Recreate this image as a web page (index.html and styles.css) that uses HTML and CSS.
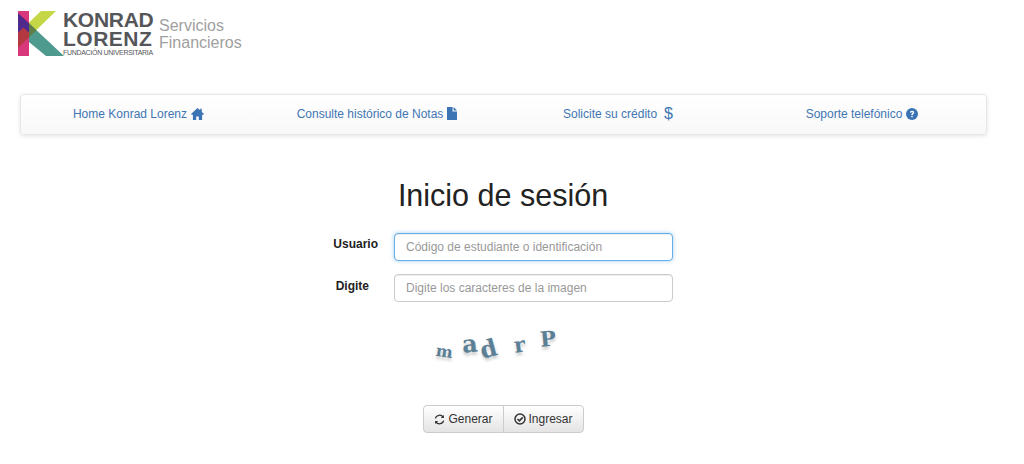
FILE: index.html
```html
<!DOCTYPE html>
<html lang="es">
<head>
  <meta charset="UTF-8">
  <meta name="viewport" content="width=device-width, initial-scale=1.0">
  <title>Inicio de sesión</title>
  <link rel="stylesheet" href="styles.css">
</head>

<body>
  <header class="brand">
    <svg class="brand-mark" width="46" height="45" viewBox="0 0 46 45">
      <rect width="11" height="45" fill="#d8377c"/>
      <polygon points="23,0 38,0 11,26.300 11,11.500" fill="#c5d646"/>
      <polygon points="11,12.300 46,45 28,45 11,31" fill="#4f9a8f"/>
      <polygon points="11,12.300 18.400,19.200 11,26.300" fill="#5f7d45"/>
      <polygon points="0,2 11,12.300 11,22 5.500,16.700 0,22" fill="#4f2a8c"/>
      <polygon points="0,22 5.500,16.700 11,22 11,26.300 0,37" fill="#b4383f"/>
    </svg>
    <div class="brand-name">
      <span class="brand-big konrad">KONRAD</span>
      <span class="brand-big lorenz">LORENZ</span>
      <span class="brand-small">FUNDACIÓN UNIVERSITARIA</span>
    </div>
    <div class="brand-sub">Servicios<br>Financieros</div>
  </header>

  <nav class="topnav">
    <a href="#">Home Konrad Lorenz
      <svg class="icon" width="13" height="12" viewBox="0 0 13 12"><path d="M6.500 0 0 6l.7.8h1.200V12h3.300V8.400h2.600V12h3.300V6.800h1.200l.7-.8-2.200-2V.8H9.200v1.500z" fill="#3b74b4"/></svg>
    </a>
    <a href="#">Consulte histórico de Notas
      <svg class="icon" width="10" height="13" viewBox="0 0 10 13"><path d="M0 0h5.600v4.400H10V13H0zM6.600 0 10 3.400H6.600z" fill="#3b74b4"/></svg>
    </a>
    <a href="#">Solicite su crédito <span class="dollar">$</span></a>
    <a href="#">Soporte telefónico
      <svg class="icon" width="12" height="12" viewBox="0 0 12 12"><circle cx="6" cy="6" r="6" fill="#3b74b4"/><path d="M3.900 4.600C4 3.400 4.900 2.700 6.100 2.700c1.200 0 2.100.8 2.100 1.800 0 1.500-1.500 1.400-1.500 2.500H5.300c0-1.700 1.400-1.700 1.400-2.500 0-.4-.3-.6-.7-.6-.4 0-.7.300-.8.800z M5.300 7.800h1.400v1.500H5.300z" fill="#fff"/></svg>
    </a>
  </nav>

  <main class="login">
    <h1>Inicio de sesión</h1>

    <div class="field">
      <label for="usuario">Usuario</label>
      <input class="focused" type="text" id="usuario" placeholder="Código de estudiante o identificación">
    </div>
    <div class="field">
      <label class="label-digite" for="digite">Digite</label>
      <input type="text" id="digite" placeholder="Digite los caracteres de la imagen">
    </div>

    <div class="captcha">
      <span class="c1">m</span><span class="c2">a</span><span class="c3">d</span><span class="c4">r</span><span class="c5">P</span>
    </div>

    <div class="btn-group">
      <button type="button">
        <svg width="11" height="11" viewBox="0 0 12 12" fill="none" stroke="#333" stroke-width="1.400"><path d="M1.500 4.800A4.700 4.700 0 0 1 10 3.500"/><path d="M10.500 7.200A4.700 4.700 0 0 1 2 8.500"/><path d="M10.800 1v3.400H7.400z M1.200 11V7.600h3.400z" fill="#333" stroke="none"/></svg>
        Generar
      </button>
      <button type="button">
        <svg width="12" height="12" viewBox="0 0 12 12" fill="none" stroke="#333"><circle cx="6" cy="6" r="5" stroke-width="1.500"/><path d="M3.500 6 5.400 7.900 8.700 4.400" stroke-width="1.600"/></svg>
        Ingresar
      </button>
    </div>
  </main>
</body>
</html>
```

FILE: styles.css
```css
* {
  box-sizing: border-box;
}
body {
  margin: 0;
  font-family: "Liberation Sans", Arial, sans-serif;
  font-size: 12px;
  color: #333;
  background: #fff;
  height: 464px;
  overflow: hidden;
}
.brand {
  display: flex;
  align-items: flex-start;
  height: 94px;
  padding: 11px 0 0 18px;
}
.brand-mark {
  flex: none;
}
.brand-name {
  width: 90px;
  margin: -1px 0 0 -1px;
  display: flex;
  flex-direction: column;
  color: #55565a;
}
.brand-big {
  font-size: 21px;
  font-weight: bold;
  line-height: 19px;
  white-space: nowrap;
}
.konrad {
  letter-spacing: -0.3px;
}
.lorenz {
  letter-spacing: 0.5px;
}
.brand-small {
  font-size: 7px;
  line-height: 9px;
  white-space: nowrap;
  letter-spacing: -0.3px;
}
.brand-sub {
  margin: 6px 0 0 6px;
  font-size: 16px;
  line-height: 17px;
  color: #a0a0a0;
}
.topnav {
  display: grid;
  grid-template-columns: 235px 242px 240px 248px;
  align-items: center;
  width: 967px;
  height: 41px;
  margin-left: 20px;
  padding-bottom: 2px;
  border: 1px solid #e7e7e7;
  border-radius: 4px;
  background: linear-gradient(to bottom, #fff, #f8f8f8);
  box-shadow: 0 1px 4px rgba(0, 0, 0, 0.12);
}
.topnav a {
  display: flex;
  justify-content: center;
  align-items: center;
  gap: 4px;
  color: #3f76b3;
  text-decoration: none;
  white-space: nowrap;
}
.dollar {
  margin-left: 3px;
  font-size: 16px;
  line-height: 1;
}
.login {
  display: flex;
  flex-direction: column;
  align-items: center;
  padding-right: 18px;
}
.login h1 {
  margin: 42px 0 20px;
  font-size: 30.5px;
  font-weight: normal;
  line-height: 36px;
  color: #222;
}
.field {
  display: flex;
  align-items: flex-start;
  justify-content: flex-end;
  width: 340px;
  margin-bottom: 13px;
}
.field label {
  margin: 4px 16px 0 0;
  font-size: 12px;
  font-weight: bold;
  line-height: 15px;
  color: #222;
}
.field .label-digite {
  margin: 5px 25px 0 0;
}
.field input {
  width: 279px;
  height: 28px;
  padding: 0 11px;
  border: 1px solid #ccc;
  border-radius: 4px;
  font: 12px "Liberation Sans", Arial, sans-serif;
  box-shadow: inset 0 1px 1px rgba(0, 0, 0, 0.075);
}
.field input::placeholder {
  color: #999;
}
.field .focused {
  border-color: #66afe9;
  box-shadow: inset 0 1px 1px rgba(0, 0, 0, 0.075), 0 0 4px rgba(102, 175, 233, 0.6);
}
.captcha {
  display: flex;
  align-items: center;
  width: 125px;
  height: 36px;
  margin: 12px 0 42px;
  font-family: "DejaVu Serif", serif;
  font-size: 24px;
  font-weight: bold;
  color: #5b8096;
  text-shadow: 0 3px 3px rgba(0, 0, 0, 0.2);
}
.captcha span {
  display: inline-block;
}
.c1 {
  font-size: 16px;
  margin-left: -5px;
  transform: translateY(6px) rotate(8deg);
}
.c2 {
  margin-left: 10px;
  transform: translateY(-2px) rotate(-5deg);
}
.c3 {
  margin-left: 2px;
  transform: translateY(3px) rotate(-15deg);
}
.c4 {
  margin-left: 17px;
  font-size: 21px;
  transform: translateY(-1px) rotate(-8deg);
}
.c5 {
  margin-left: 15px;
  font-size: 21px;
  transform: translateY(-7px) rotate(-5deg);
}
.btn-group {
  display: flex;
  margin-left: 1px;
}
.btn-group button {
  display: flex;
  align-items: center;
  gap: 3px;
  height: 28px;
  padding: 0 10px;
  border: 1px solid #ccc;
  background: linear-gradient(to bottom, #fff, #e4e4e4);
  font: 12px "Liberation Sans", Arial, sans-serif;
  color: #333;
  white-space: nowrap;
}
.btn-group button:first-child {
  border-radius: 4px 0 0 4px;
}
.btn-group button:last-child {
  margin-left: -1px;
  border-radius: 0 4px 4px 0;
}
```
